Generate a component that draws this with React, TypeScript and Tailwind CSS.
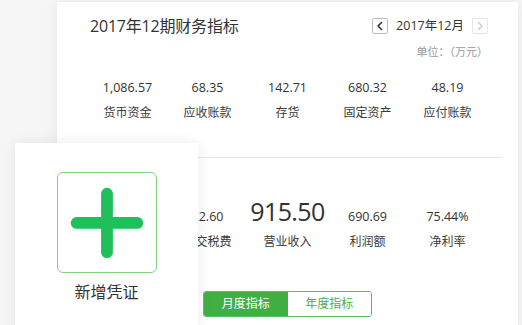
const row1 = [
  { value: "1,086.57", label: "货币资金" },
  { value: "68.35", label: "应收账款" },
  { value: "142.71", label: "存货" },
  { value: "680.32", label: "固定资产" },
  { value: "48.19", label: "应付账款" },
];

const row2 = [
  { value: "226.90", label: "营业成本" },
  { value: "12.60", label: "应交税费" },
  { value: "915.50", label: "营业收入", big: true },
  { value: "690.69", label: "利润额" },
  { value: "75.44%", label: "净利率" },
];

function Chevron({ dir, color }: { dir: "left" | "right"; color: string }) {
  return (
    <svg width="10" height="10" viewBox="0 0 10 10" fill="none">
      <path
        d={dir === "left" ? "M6.5 1.5 L3 5 L6.5 8.5" : "M3.5 1.5 L7 5 L3.5 8.5"}
        stroke={color}
        strokeWidth="1.6"
        strokeLinecap="round"
        strokeLinejoin="round"
      />
    </svg>
  );
}

export default function App() {
  return (
    <div
      className="relative h-[325px] w-[522px] overflow-hidden bg-[#f6f6f6] text-[#333]"
      style={{ fontFamily: '"Open Sans", "Noto Sans CJK SC", sans-serif' }}
    >
      <div className="ml-[57px] mt-[2px] flex h-[330px] w-[461px] flex-col bg-white shadow-[0_0_14px_rgba(0,0,0,0.07)]">
        {/* header */}
        <div className="flex h-[60px] justify-between pl-[33px] pr-[30px] pt-[12px]">
          <h1 className="text-[16px] leading-[24px] font-normal tracking-[-0.2px]">2017年12期财务指标</h1>
          <div className="flex flex-col items-end pt-[4px]">
            <div className="flex h-[16px] items-center">
              <button className="flex h-[16px] w-[16px] items-center justify-center rounded-[2px] border border-[#bdbdbd]">
                <Chevron dir="left" color="#333" />
              </button>
              <span className="mx-[8px] text-[12.5px] leading-[16px]">2017年12月</span>
              <button className="flex h-[16px] w-[16px] items-center justify-center rounded-[2px] border border-[#e6e6e6]">
                <Chevron dir="right" color="#cfcfcf" />
              </button>
            </div>
            <span className="mt-[11px] text-[11px] leading-[14px] text-[#999]">单位：（万元）</span>
          </div>
        </div>

        {/* balance indicators */}
        <div className="mx-auto mt-[16px] grid w-[400px] grid-cols-5 text-center text-[12px]">
          {row1.map((m) => (
            <div key={m.label}>
              <div className="text-[12.5px] leading-[20px]">{m.value}</div>
              <div className="mt-[5px] leading-[20px] text-[#3a3a3a]">{m.label}</div>
            </div>
          ))}
        </div>

        <div className="mx-[16px] mt-[34px] h-px bg-[#e6e6e6]" />

        {/* income indicators */}
        <div className="mx-auto mt-[29px] grid w-[400px] grid-cols-5 text-center text-[12px]">
          {row2.map((m) => (
            <div key={m.label}>
              <div className="flex h-[40px] items-end justify-center">
                <span
                  className={
                    m.big
                      ? "text-[25px] leading-[32px] tracking-[-0.6px]"
                      : "text-[12.5px] leading-[20px]"
                  }
                >
                  {m.value}
                </span>
              </div>
              <div className="mt-[5px] leading-[20px] text-[#3a3a3a]">{m.label}</div>
            </div>
          ))}
        </div>

        <div className="mx-auto mt-[39px] flex h-[26px] w-[169px] overflow-hidden rounded-[3px] border border-[#5dbd5d] text-[12px]">
          <button className="flex-1 bg-[#40b045] text-white">月度指标</button>
          <button className="flex-1 bg-white text-[#4aae4a]">年度指标</button>
        </div>
      </div>

      {/* quick action overlay */}
      <div className="absolute left-[15px] top-[143px] flex h-[190px] w-[183px] flex-col items-center bg-white pt-[29px] shadow-[0_0_14px_rgba(0,0,0,0.08)]">
        <div className="flex h-[101px] w-[100px] items-center justify-center rounded-[6px] border border-[#7fd07f]">
          <svg width="100" height="101" viewBox="0 0 100 101">
            <path d="M19 51 H81 M50 21 V81" stroke="#1fc05a" strokeWidth="12" strokeLinecap="round" />
          </svg>
        </div>
        <span className="mt-[8px] text-[16px] leading-[22px]">新增凭证</span>
      </div>
    </div>
  );
}
